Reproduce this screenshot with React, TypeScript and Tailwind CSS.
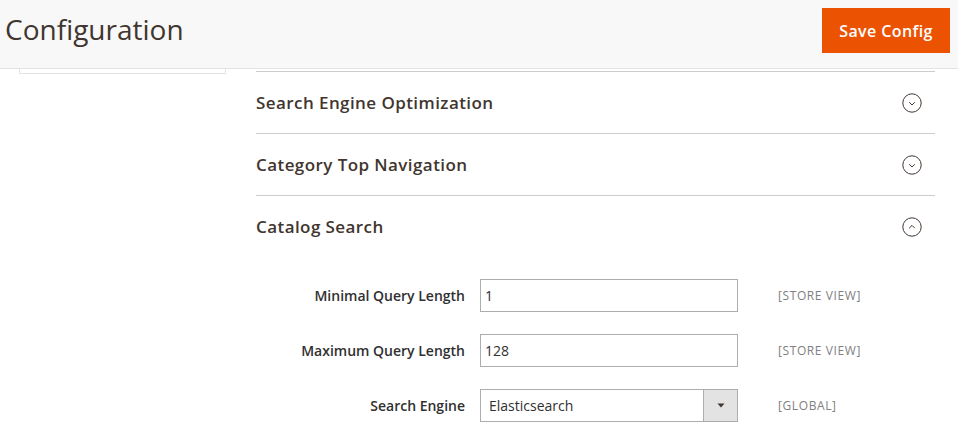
import React from 'react';

const Chevron = ({ open }: { open?: boolean }) => (
  <svg width="20" height="20" viewBox="0 0 20 20" className="mr-[13px]" fill="none">
    <circle cx="10" cy="10" r="9.2" stroke="#41362f" strokeWidth="1" />
    {open ? (
      <path d="M7.2 11.2 L10 8.4 L12.8 11.2" stroke="#41362f" strokeWidth="1" />
    ) : (
      <path d="M7.2 9.2 L10 12 L12.8 9.2" stroke="#41362f" strokeWidth="1" />
    )}
  </svg>
);

const Section = ({ title, open, border = true }: { title: string; open?: boolean; border?: boolean }) => (
  <div className={`h-[62px] flex items-center justify-between ${border ? 'border-b border-[#cccccc]' : ''}`}>
    <span className="text-[17px] font-semibold tracking-[0.025em] text-[#41362f]">{title}</span>
    <Chevron open={open} />
  </div>
);

const fields = [
  { label: 'Minimal Query Length', value: '1', scope: '[STORE VIEW]' },
  { label: 'Maximum Query Length', value: '128', scope: '[STORE VIEW]' },
];

export default function App() {
  return (
    <div className="w-[958px] h-[429px] overflow-hidden bg-white font-['Open_Sans',sans-serif]">
      <header className="h-[69px] bg-[#f8f8f8] border-b border-[#e3e3e3] flex items-start justify-between pl-[5px] pr-[8px]">
        <h1 className="mt-[15px] text-[28px] leading-[28px] text-[#41362f]">Configuration</h1>
        <button className="mt-[8px] h-[45px] w-[128px] bg-[#eb5202] text-white text-[16px] font-semibold tracking-[0.025em]">
          Save Config
        </button>
      </header>

      <div className="flex">
        <div className="ml-[19px] w-[207px] h-[5px] border-x border-b border-[#e3e3e3]" />

        <div className="ml-[30px] w-[679px] mt-[2px] border-t border-[#cccccc]">
          <Section title="Search Engine Optimization" />
          <Section title="Category Top Navigation" />
          <div className="h-[61px] flex items-center justify-between">
            <span className="text-[17px] font-semibold tracking-[0.025em] text-[#41362f]">Catalog Search</span>
            <Chevron open />
          </div>

          <div className="pt-[22px] flex flex-col gap-[22px]">
            {fields.map((f) => (
              <div key={f.label} className="flex items-center">
                <label className="w-[209px] text-right text-[14px] font-semibold text-[#303030]">{f.label}</label>
                <div className="ml-[15px] w-[258px] h-[33px] border border-[#adadad] flex items-center pl-[4px] text-[14px] text-[#303030]">
                  {f.value}
                </div>
                <span className="ml-[40px] text-[12px] tracking-[0.05em] text-[#808080]">{f.scope}</span>
              </div>
            ))}
            <div className="flex items-center">
              <label className="w-[209px] text-right text-[14px] font-semibold text-[#303030]">Search Engine</label>
              <div className="ml-[15px] w-[258px] h-[33px] border border-[#adadad] flex text-[14px] text-[#303030]">
                <span className="flex-1 flex items-center pl-[8px]">Elasticsearch</span>
                <span className="w-[34px] border-l border-[#adadad] bg-[#e3e3e3] flex items-center justify-center">
                  <svg width="8" height="5" viewBox="0 0 8 5">
                    <path d="M0.5 0.5 H7.5 L4 4.5 Z" fill="#41362f" />
                  </svg>
                </span>
              </div>
              <span className="ml-[40px] text-[12px] tracking-[0.05em] text-[#808080]">[GLOBAL]</span>
            </div>
          </div>
        </div>
      </div>
    </div>
  );
}
